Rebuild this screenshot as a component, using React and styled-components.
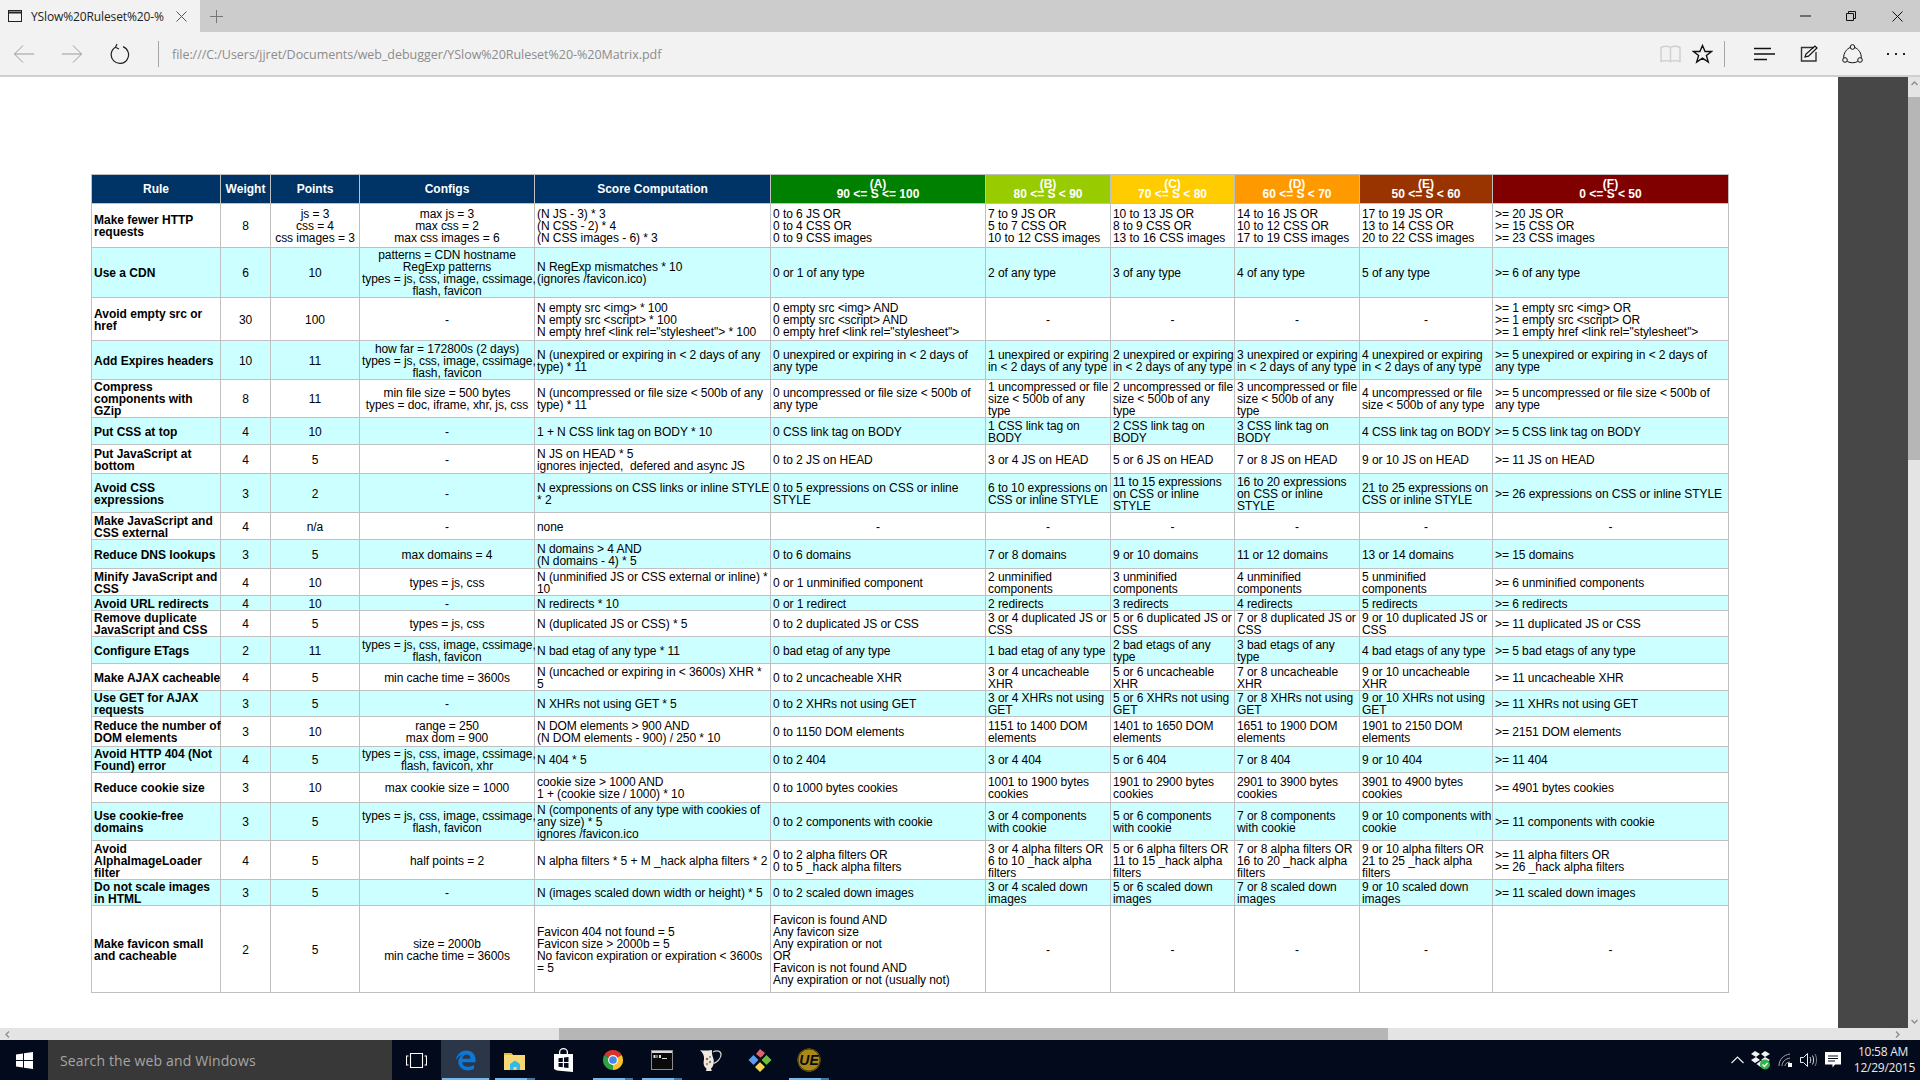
import React from "react";
import styled, { createGlobalStyle } from "styled-components";

const Global = createGlobalStyle`
  html, body { margin: 0; padding: 0; overflow: hidden; background: #fff; }
  * { box-sizing: border-box; }
`;

const Page = styled.div`
  width: 1920px; height: 1080px; display: flex; flex-direction: column; overflow: hidden;
  font-family: "Liberation Sans", Arial, sans-serif;
`;
const TabBar = styled.div`
  height: 32px; background: #cccccc; display: flex; align-items: stretch; flex: none;
`;
const Tab = styled.div`
  width: 200px; background: #f2f2f2; display: flex; align-items: center; padding-left: 7px; flex: none;
`;
const TabTitle = styled.span`
  width: 138px; margin-left: 7px; white-space: nowrap;
  font: 12px "Open Sans", sans-serif; color: #222; flex: none; letter-spacing: -0.12px;
`;
const TabClose = styled.span`
  margin-left: 7px; display: flex;
`;
const NewTab = styled.span`
  margin-left: 10px; width: 14px; display: flex; align-items: center;
`;
const WindowControls = styled.div`
  margin-left: auto; display: flex; align-items: center; padding-right: 0;
`;
const WindowButton = styled.span`
  width: 46px; height: 32px; display: flex; align-items: center; justify-content: center;
`;
const Toolbar = styled.div`
  height: 45px; flex: none; background: #f2f2f2; border-bottom: 2px solid #cfcfcf;
  display: flex; align-items: center; padding-right: 2px;
`;
const NavSlot = styled.span`
  width: 48px; height: 40px; display: flex; align-items: center; justify-content: center; flex: none;
`;
const ToolDivider = styled.span`
  width: 1px; height: 26px; background: #a6a6a6; flex: none;
  margin-left: ${p => p.$ml}px; margin-right: ${p => p.$mr}px;
`;
const Address = styled.span`
  font: 12.5px "Open Sans", sans-serif; color: #8c8c8c; white-space: nowrap; letter-spacing: -0.04px;
  padding-top: 1px;
`;
const ToolRight = styled.div`
  margin-left: auto; display: flex; align-items: center;
`;
const SmallSlot = styled.span`
  width: 32px; height: 40px; display: flex; align-items: center; justify-content: center;
`;
const HubSlot = styled.span`
  width: 44px; height: 40px; display: flex; align-items: center; justify-content: center;
`;
const Viewer = styled.div`
  flex: 1; min-height: 0; display: flex; flex-direction: column; background: #fff;
`;
const ViewerTop = styled.div`
  flex: 1; min-height: 0; display: flex;
`;
const Doc = styled.div`
  flex: 1; min-width: 0; overflow: hidden; padding: 97px 0 0 91px; background: #fff;
`;
const Gutter = styled.div`
  width: 70px; background: #474747; flex: none;
`;
const VScroll = styled.div`
  width: 12px; flex: none; background: #e4e4e4; display: flex; flex-direction: column;
`;
const ScrollArrow = styled.span`
  width: 12px; height: 20px; display: flex; justify-content: center; padding-top: 4px; flex: none;
`;
const VThumb = styled.div`
  height: 363px; background: #b6b6b6; flex: none;
`;
const VRest = styled.div`
  flex: 1; display: flex; align-items: flex-end; justify-content: center; padding-bottom: 4px;
`;
const HScroll = styled.div`
  height: 12px; flex: none; background: #e4e4e4; display: flex; align-items: center; position: relative;
`;
const HArrowLeft = styled.span`
  width: 12px; margin-left: 1px; display: flex; justify-content: center;
`;
const HThumb = styled.div`
  margin-left: 546px; width: 829px; height: 12px; background: #b6b6b6;
`;
const HArrowRight = styled.span`
  margin-left: auto; width: 12px; margin-right: 17px; display: flex; justify-content: center;
`;

const Table = styled.table`
  border-collapse: collapse; table-layout: fixed; width: 1637px;
  font: 12px/12px "Liberation Sans", Arial, sans-serif; color: #000;
`;
const HeadCell = styled.th`
  background: ${p => p.$bg}; color: #fff; border: 1px solid #c0c0c0; padding: 0 2px;
  font-weight: bold; text-align: center; line-height: ${p => p.$grade ? "10px" : "12px"};
  white-space: pre; vertical-align: middle;
`;
const Row = styled.tr`
  height: ${p => p.$h}px; background: ${p => p.$alt ? "#ccffff" : "#ffffff"};
`;
const Cell = styled.td`
  border: 1px solid #c0c0c0; padding: 1px 2px 0; white-space: pre; vertical-align: middle; overflow: visible;
  text-align: ${p => p.$center ? "center" : "left"};
  font-weight: ${p => p.$bold ? "bold" : "normal"};
  letter-spacing: ${p => p.$bold ? "0" : "-0.06px"};
`;

const Taskbar = styled.div`
  height: 40px; flex: none; background: #030a1c; display: flex; align-items: stretch; color: #fff;
`;
const StartButton = styled.span`
  width: 48px; display: flex; align-items: center; justify-content: center; flex: none;
`;
const SearchBox = styled.div`
  width: 344px; background: #383838; color: #a6a6a6; display: flex; align-items: center; padding-left: 12px;
  font: 14px "Open Sans", sans-serif; letter-spacing: 0.14px; flex: none;
`;
const TaskView = styled.span`
  width: 49px; display: flex; align-items: center; justify-content: center; flex: none;
`;
const TaskApp = styled.span`
  width: 49px; display: flex; align-items: center; justify-content: center; flex: none; position: relative;
  background: ${p => p.$active ? "#2b3648" : "transparent"};
  ${p => p.$running && `
    &::after {
      content: ""; position: absolute; bottom: 0; left: ${p.$active ? 1 : 5}px; height: 2px;
      width: ${p.$active ? 47 : 40}px; background: ${p.$active ? "#76b9ed" : "linear-gradient(to right, #76b9ed 32px, #3f78a8 32px)"};
    }
  `}
`;
const Tray = styled.div`
  margin-left: auto; display: flex; align-items: center;
`;
const TrayIcon = styled.span`
  width: ${p => p.$w}px; display: flex; align-items: center; justify-content: center;
`;
const Clock = styled.div`
  width: 64px; margin-left: 4px; margin-right: 5px; text-align: right;
  font: 12px/16px "Open Sans", sans-serif; color: #e8e8e8; letter-spacing: -0.25px; white-space: nowrap;
`;
const ClockLine = styled.div`
  text-align: ${p => p.$center ? "center" : "right"};
`;

const columns = [
  { name: "Rule", w: 129, bg: "#003366" },
  { name: "Weight", w: 50, bg: "#003366" },
  { name: "Points", w: 89, bg: "#003366" },
  { name: "Configs", w: 175, bg: "#003366" },
  { name: "Score Computation", w: 236, bg: "#003366" },
  { name: "(A)\n90 <= S <= 100", w: 215, bg: "#008000", grade: true },
  { name: "(B)\n80 <= S < 90", w: 125, bg: "#99cc00", grade: true },
  { name: "(C)\n70 <= S < 80", w: 124, bg: "#ffcc00", grade: true },
  { name: "(D)\n60 <= S < 70", w: 125, bg: "#ff9900", grade: true },
  { name: "(E)\n50 <= S < 60", w: 133, bg: "#993300", grade: true },
  { name: "(F)\n0 <= S < 50", w: 236, bg: "#800000", grade: true },
];

const ALL_TYPES = "types = js, css, image, cssimage,\nflash, favicon";

const rows = [
  [44, "Make fewer HTTP\nrequests", "8", "js = 3\ncss = 4\ncss images = 3", "max js = 3\nmax css = 2\nmax css images = 6", "(N JS - 3) * 3\n(N CSS - 2) * 4\n(N CSS images - 6) * 3", "0 to 6 JS OR\n0 to 4 CSS OR\n0 to 9 CSS images", "7 to 9 JS OR\n5 to 7 CSS OR\n10 to 12 CSS images", "10 to 13 JS OR\n8 to 9 CSS OR\n13 to 16 CSS images", "14 to 16 JS OR\n10 to 12 CSS OR\n17 to 19 CSS images", "17 to 19 JS OR\n13 to 14 CSS OR\n20 to 22 CSS images", ">= 20 JS OR\n>= 15 CSS OR\n>= 23 CSS images"],
  [50, "Use a CDN", "6", "10", "patterns = CDN hostname\nRegExp patterns\n" + ALL_TYPES, "N RegExp mismatches * 10\n(ignores /favicon.ico)", "0 or 1 of any type", "2 of any type", "3 of any type", "4 of any type", "5 of any type", ">= 6 of any type"],
  [43, "Avoid empty src or\nhref", "30", "100", "-", "N empty src <img> * 100\nN empty src <script> * 100\nN empty href <link rel=\"stylesheet\"> * 100", "0 empty src <img> AND\n0 empty src <script> AND\n0 empty href <link rel=\"stylesheet\">", "-", "-", "-", "-", ">= 1 empty src <img> OR\n>= 1 empty src <script> OR\n>= 1 empty href <link rel=\"stylesheet\">"],
  [39, "Add Expires headers", "10", "11", "how far = 172800s (2 days)\n" + ALL_TYPES, "N (unexpired or expiring in < 2 days of any\ntype) * 11", "0 unexpired or expiring in < 2 days of\nany type", "1 unexpired or expiring\nin < 2 days of any type", "2 unexpired or expiring\nin < 2 days of any type", "3 unexpired or expiring\nin < 2 days of any type", "4 unexpired or expiring\nin < 2 days of any type", ">= 5 unexpired or expiring in < 2 days of\nany type"],
  [38, "Compress\ncomponents with\nGZip", "8", "11", "min file size = 500 bytes\ntypes = doc, iframe, xhr, js, css", "N (uncompressed or file size < 500b of any\ntype) * 11", "0 uncompressed or file size < 500b of\nany type", "1 uncompressed or file\nsize < 500b of any\ntype", "2 uncompressed or file\nsize < 500b of any\ntype", "3 uncompressed or file\nsize < 500b of any\ntype", "4 uncompressed or file\nsize < 500b of any type", ">= 5 uncompressed or file size < 500b of\nany type"],
  [27, "Put CSS at top", "4", "10", "-", "1 + N CSS link tag on BODY * 10", "0 CSS link tag on BODY", "1 CSS link tag on\nBODY", "2 CSS link tag on\nBODY", "3 CSS link tag on\nBODY", "4 CSS link tag on BODY", ">= 5 CSS link tag on BODY"],
  [29, "Put JavaScript at\nbottom", "4", "5", "-", "N JS on HEAD * 5\nignores injected,  defered and async JS", "0 to 2 JS on HEAD", "3 or 4 JS on HEAD", "5 or 6 JS on HEAD", "7 or 8 JS on HEAD", "9 or 10 JS on HEAD", ">= 11 JS on HEAD"],
  [39, "Avoid CSS\nexpressions", "3", "2", "-", "N expressions on CSS links or inline STYLE\n* 2", "0 to 5 expressions on CSS or inline\nSTYLE", "6 to 10 expressions on\nCSS or inline STYLE", "11 to 15 expressions\non CSS or inline\nSTYLE", "16 to 20 expressions\non CSS or inline\nSTYLE", "21 to 25 expressions on\nCSS or inline STYLE", ">= 26 expressions on CSS or inline STYLE"],
  [27, "Make JavaScript and\nCSS external", "4", "n/a", "-", "none", "-", "-", "-", "-", "-", "-"],
  [29, "Reduce DNS lookups", "3", "5", "max domains = 4", "N domains > 4 AND\n(N domains - 4) * 5", "0 to 6 domains", "7 or 8 domains", "9 or 10 domains", "11 or 12 domains", "13 or 14 domains", ">= 15 domains"],
  [27, "Minify JavaScript and\nCSS", "4", "10", "types = js, css", "N (unminified JS or CSS external or inline) *\n10", "0 or 1 unminified component", "2 unminified\ncomponents", "3 unminified\ncomponents", "4 unminified\ncomponents", "5 unminified\ncomponents", ">= 6 unminified components"],
  [15, "Avoid URL redirects", "4", "10", "-", "N redirects * 10", "0 or 1 redirect", "2 redirects", "3 redirects", "4 redirects", "5 redirects", ">= 6 redirects"],
  [26, "Remove duplicate\nJavaScript and CSS", "4", "5", "types = js, css", "N (duplicated JS or CSS) * 5", "0 to 2 duplicated JS or CSS", "3 or 4 duplicated JS or\nCSS", "5 or 6 duplicated JS or\nCSS", "7 or 8 duplicated JS or\nCSS", "9 or 10 duplicated JS or\nCSS", ">= 11 duplicated JS or CSS"],
  [27, "Configure ETags", "2", "11", ALL_TYPES, "N bad etag of any type * 11", "0 bad etag of any type", "1 bad etag of any type", "2 bad etags of any\ntype", "3 bad etags of any\ntype", "4 bad etags of any type", ">= 5 bad etags of any type"],
  [27, "Make AJAX cacheable", "4", "5", "min cache time = 3600s", "N (uncached or expiring in < 3600s) XHR *\n5", "0 to 2 uncacheable XHR", "3 or 4 uncacheable\nXHR", "5 or 6 uncacheable\nXHR", "7 or 8 uncacheable\nXHR", "9 or 10 uncacheable\nXHR", ">= 11 uncacheable XHR"],
  [26, "Use GET for AJAX\nrequests", "3", "5", "-", "N XHRs not using GET * 5", "0 to 2 XHRs not using GET", "3 or 4 XHRs not using\nGET", "5 or 6 XHRs not using\nGET", "7 or 8 XHRs not using\nGET", "9 or 10 XHRs not using\nGET", ">= 11 XHRs not using GET"],
  [30, "Reduce the number of\nDOM elements", "3", "10", "range = 250\nmax dom = 900", "N DOM elements > 900 AND\n(N DOM elements - 900) / 250 * 10", "0 to 1150 DOM elements", "1151 to 1400 DOM\nelements", "1401 to 1650 DOM\nelements", "1651 to 1900 DOM\nelements", "1901 to 2150 DOM\nelements", ">= 2151 DOM elements"],
  [26, "Avoid HTTP 404 (Not\nFound) error", "4", "5", "types = js, css, image, cssimage,\nflash, favicon, xhr", "N 404 * 5", "0 to 2 404", "3 or 4 404", "5 or 6 404", "7 or 8 404", "9 or 10 404", ">= 11 404"],
  [30, "Reduce cookie size", "3", "10", "max cookie size = 1000", "cookie size > 1000 AND\n1 + (cookie size / 1000) * 10", "0 to 1000 bytes cookies", "1001 to 1900 bytes\ncookies", "1901 to 2900 bytes\ncookies", "2901 to 3900 bytes\ncookies", "3901 to 4900 bytes\ncookies", ">= 4901 bytes cookies"],
  [38, "Use cookie-free\ndomains", "3", "5", ALL_TYPES, "N (components of any type with cookies of\nany size) * 5\nignores /favicon.ico", "0 to 2 components with cookie", "3 or 4 components\nwith cookie", "5 or 6 components\nwith cookie", "7 or 8 components\nwith cookie", "9 or 10 components with\ncookie", ">= 11 components with cookie"],
  [39, "Avoid\nAlphaImageLoader\nfilter", "4", "5", "half points = 2", "N alpha filters * 5 + M _hack alpha filters * 2", "0 to 2 alpha filters OR\n0 to 5 _hack alpha filters", "3 or 4 alpha filters OR\n6 to 10 _hack alpha\nfilters", "5 or 6 alpha filters OR\n11 to 15 _hack alpha\nfilters", "7 or 8 alpha filters OR\n16 to 20 _hack alpha\nfilters", "9 or 10 alpha filters OR\n21 to 25 _hack alpha\nfilters", ">= 11 alpha filters OR\n>= 26 _hack alpha filters"],
  [26, "Do not scale images\nin HTML", "3", "5", "-", "N (images scaled down width or height) * 5", "0 to 2 scaled down images", "3 or 4 scaled down\nimages", "5 or 6 scaled down\nimages", "7 or 8 scaled down\nimages", "9 or 10 scaled down\nimages", ">= 11 scaled down images"],
  [87, "Make favicon small\nand cacheable", "2", "5", "size = 2000b\nmin cache time = 3600s", "Favicon 404 not found = 5\nFavicon size > 2000b = 5\nNo favicon expiration or expiration < 3600s\n= 5", "Favicon is found AND\nAny favicon size\nAny expiration or not\nOR\nFavicon is not found AND\nAny expiration or not (usually not)", "-", "-", "-", "-", "-"],
];

const isCentered = (index, text) => index === 1 || index === 2 || index === 3 || (index >= 5 && text === "-");

const Line = ({ d, w = 1, c = "#444", ...rest }) => <path d={d} fill="none" stroke={c} strokeWidth={w} {...rest} />;

const Icons = {
  page: <svg width="17" height="15" viewBox="0 0 17 15"><rect x="1.5" y="1.5" width="13" height="11" fill="none" stroke="#222" /><path d="M1.5 3.5h13" stroke="#222" strokeWidth="2" /></svg>,
  close: <svg width="11" height="11" viewBox="0 0 11 11"><Line d="M.5.5l10 10M10.5.5l-10 10" c="#555" /></svg>,
  plus: <svg width="13" height="13" viewBox="0 0 13 13"><Line d="M6.5 0v13M0 6.5h13" c="#777" /></svg>,
  min: <svg width="11" height="2" viewBox="0 0 11 2"><path d="M0 1h11" stroke="#111" /></svg>,
  restore: <svg width="10" height="10" viewBox="0 0 10 10"><Line d="M.5 2.5h7v7h-7zM2.5 2.5v-2h7v7h-2" c="#111" /></svg>,
  x: <svg width="11" height="11" viewBox="0 0 11 11"><Line d="M.5.5l10 10M10.5.5l-10 10" c="#111" /></svg>,
  back: <svg width="22" height="20" viewBox="0 0 22 20"><Line d="M21 10H1.5M10 1.5L1.5 10l8.5 8.5" c="#9a9a9a" /></svg>,
  forward: <svg width="22" height="20" viewBox="0 0 22 20"><Line d="M1 10h19.5M12 1.5l8.5 8.5-8.5 8.5" c="#9a9a9a" /></svg>,
  refresh: <svg width="20" height="22" viewBox="0 0 20 22"><Line d="M5.5 4.2A8.7 8.7 0 1 0 13 3.6" c="#222" w="1.2" /><Line d="M7 1l-1.5 3.2L9 6" c="#222" w="1.2" /></svg>,
  book: <svg width="21" height="18" viewBox="0 0 21 18"><Line d="M1 2.5C4 1 8 1 10.5 2.5 13 1 17 1 20 2.5v14c-3-1-7-1-9.5 0-2.5-1-6.500-1-9.500 0zM10.500 2.500v14" c="#cfcfcf" w="1.4" /></svg>,
  star: <svg width="21" height="20" viewBox="0 0 21 20"><path d="M10.500 1.500l2.600 6h6.400l-5.100 4 1.900 6.500-5.800-3.800L4.700 18l1.900-6.500-5.100-4h6.400z" fill="none" stroke="#111" strokeWidth="1.400" /></svg>,
  hub: <svg width="21" height="14" viewBox="0 0 21 14"><path d="M0 1.500h17M0 7h21M0 12.500h13" stroke="#111" strokeWidth="1.300" /></svg>,
  note: <svg width="20" height="17" viewBox="0 0 20 17"><Line d="M16 2.500H3.500v13.500h14.500V7" c="#333" w="1.400" /><path d="M7 12l1-3 9-8 2 2-8.500 8.200z" fill="none" stroke="#111" strokeWidth="1.200" /></svg>,
  share: <svg width="21" height="20" viewBox="0 0 21 20"><circle cx="10.500" cy="3" r="2.300" fill="none" stroke="#111" /><circle cx="3" cy="16" r="2.300" fill="none" stroke="#111" /><circle cx="18" cy="16" r="2.300" fill="none" stroke="#111" /><Line d="M8.200 3.500C4.500 5 1.500 9 1.700 13.900M12.800 3.500C16.500 5 19.500 9 19.300 13.900M5.300 17.500c3.500 1.700 7 1.700 10.400 0" c="#111" /></svg>,
  more: <svg width="18" height="4" viewBox="0 0 18 4"><g fill="#222"><rect x="0" y="1" width="2" height="2" /><rect x="8" y="1" width="2" height="2" /><rect x="16" y="1" width="2" height="2" /></g></svg>,
  up: <svg width="7" height="5" viewBox="0 0 7 5"><path d="M.5 4l3-3 3 3" fill="none" stroke="#8e8e8e" strokeWidth="1.400" /></svg>,
  down: <svg width="7" height="5" viewBox="0 0 7 5"><path d="M.5 1l3 3 3-3" fill="none" stroke="#8e8e8e" strokeWidth="1.400" /></svg>,
  left: <svg width="5" height="7" viewBox="0 0 5 7"><path d="M4 .5l-3 3 3 3" fill="none" stroke="#8e8e8e" strokeWidth="1.400" /></svg>,
  right: <svg width="5" height="7" viewBox="0 0 5 7"><path d="M1 .5l3 3-3 3" fill="none" stroke="#8e8e8e" strokeWidth="1.400" /></svg>,
  windows: <svg width="17" height="17" viewBox="0 0 17 17"><path d="M0 2.400l7-1v6.600H0zM8 1.200l9-1.200v8H8zM0 9h7v6.600l-7-1zM8 9h9v8l-9-1.200z" fill="#fff" /></svg>,
  taskView: <svg width="21" height="15" viewBox="0 0 21 15"><Line d="M4.500.5h12v14h-12zM2.500 3H.5v9h2M18.500 3h2v9h-2" c="#fff" w="1.100" /></svg>,
  edge: <svg width="21" height="22" viewBox="0 0 24 24"><path fillRule="evenodd" d="M1 12.500C1.500 6 6.500 1 13 1c6.500 0 10.500 4.500 10.500 11v2.500H8c.5 3.500 3.300 5.300 6.800 5.300 2.700 0 5-.7 7-2v4.300c-2 1.200-4.900 1.900-7.900 1.900C7.500 23 3.800 19 3.800 14c0-3.500 2-6.200 5-8C5.500 6.500 2.800 9 1 12.500zM8.300 10.500h9.500C17.700 7.500 15.700 5.700 13 5.700c-2.500 0-4.200 2-4.700 4.800z" fill="#0c78d8" /></svg>,
  explorer: <svg width="22" height="19" viewBox="0 0 22 19"><path d="M0 2h7l2 2h12v15H0z" fill="#f8d775" /><path d="M0 2h7l2 2h-9z" fill="#e8b93c" /><path d="M6 19v-6l5-3.500 5 3.500v6h-3.500v-3h-3v3z" fill="#35b9e6" /></svg>,
  store: <svg width="21" height="24" viewBox="0 0 21 24"><path fillRule="evenodd" d="M1 6h19v18L4 22.500 1 21zM6 6V4a4.500 4 0 0 1 9 0v2h-1.300V4a3.200 2.800 0 0 0-6.400 0v2z" fill="#fff" /><path d="M5.500 10.300l4.300-.5v4.200H5.500zM11 9.600l4.500-.6v5h-4.500zM5.500 15h4.300v4.300l-4.300-.6zM11 15h4.500v5l-4.500-.6z" fill="#030a1c" /></svg>,
  chrome: <svg width="22" height="22" viewBox="0 0 24 24"><path d="M12 12L2.500 6.500A11 11 0 0 1 21.500 6.500z" fill="#d8352a" /><path d="M12 12L2.500 6.500A11 11 0 0 0 12 23z" fill="#2f9e44" /><path d="M12 12L21.500 6.500A11 11 0 0 1 12 23z" fill="#f7c325" /><circle cx="12" cy="12" r="5.400" fill="#fff" /><circle cx="12" cy="12" r="4.200" fill="#4a86e8" /></svg>,
  cmd: <svg width="22" height="20" viewBox="0 0 22 20"><rect width="22" height="20" fill="#8c8c8c" /><rect x="1" y="3" width="20" height="16" fill="#0a0a0a" /><rect x="1" y="1" width="20" height="2" fill="#dcdcdc" /><rect x="2.500" y="5" width="2" height="3" fill="#ddd" /><rect x="5.500" y="5" width="1" height="3" fill="#ddd" /><rect x="8" y="5" width="2" height="3" fill="#ddd" /><rect x="11" y="8" width="5" height="1" fill="#ddd" /></svg>,
  pitcher: <svg width="24" height="24" viewBox="0 0 24 24"><path d="M1 2c3 1 8 .5 12 0-.5 3 .5 6 1.500 9 1 4-.5 8-2.500 9.500l.8 2.500H7l.5-2.500C5 19 4 15.500 5 11.500 5.500 8 4 5 1 2z" fill="#eeeae2" /><path d="M14 4c4-2 8-1 8 2.500 0 4-4 7.500-7.500 9" fill="none" stroke="#cfcbc2" strokeWidth="1.300" /><circle cx="8" cy="11" r="1.300" fill="#b5574b" /><circle cx="11" cy="14" r="1.200" fill="#6e8a54" /><circle cx="8" cy="16" r="1.200" fill="#c58a5c" /><circle cx="11" cy="9" r="1" fill="#6b7f9e" /></svg>,
  git: <svg width="24" height="24" viewBox="0 0 24 24"><path d="M5.500 7L10.500 12 5.500 17 .5 12z" fill="#5b9bf0" /><path d="M12 1l5 4-4 5-5-4z" fill="#e4606d" /><path d="M18.500 7l5 5-5 5-5-5z" fill="#6cbf3c" /><path d="M12 14l5 5-5 5-5-5z" fill="#f6d350" /><path d="M10 9l4 6M14 9l-4 6" stroke="#111" strokeWidth="1.400" /></svg>,
  dropbox: <svg width="20" height="20" viewBox="0 0 20 20"><path d="M4 1l5 3-4 3-5-3zM14 1l5 3-5 3-4-3zM5 7l4 3-5 3-4-3zM14 7l5 3-5 3-4-3zM9.500 11l4 3-4 3-4-3z" fill="#f2f2f2" /><circle cx="14" cy="14.500" r="5" fill="#31b24a" /><path d="M11.500 14.500l2 2 3-3.500" fill="none" stroke="#fff" strokeWidth="1.300" /></svg>,
  caret: <svg width="13" height="8" viewBox="0 0 13 8"><path d="M.5 7L6.500 1l6 6" fill="none" stroke="#eee" strokeWidth="1.200" /></svg>,
  wifi: <svg width="14" height="14" viewBox="0 0 14 14"><path d="M1 13C1 7 5 2 12 1M4 13c0-4 3-7 8-8M7 13c0-2 2-4 5-4" fill="none" stroke="#a8a8a8" strokeWidth="1" /><rect x="10" y="10" width="4" height="4" fill="#fff" /></svg>,
  speaker: <svg width="17" height="14" viewBox="0 0 17 14"><path d="M.5 4.500h3l4-4v13l-4-4h-3z" fill="none" stroke="#eee" /><path d="M10 4c1 2 1 4 0 6M12.500 2.500c1.500 3 1.500 6 0 9" fill="none" stroke="#ddd" /><path d="M15 1c2 3.500 2 8.500 0 12" fill="none" stroke="#888" /></svg>,
  message: <svg width="16" height="16" viewBox="0 0 16 16"><path fillRule="evenodd" d="M0 0h16v12.500H10L7.500 15.500V12.500H0zM3 3.500v1h10v-1zM3 6v1h10V6zM3 8.500v1h7v-1z" fill="#fff" /></svg>,
};

const UEIcon = () => (
  <svg width="24" height="24" viewBox="0 0 24 24">
    <circle cx="12" cy="12" r="11.500" fill="#a98a16" />
    <circle cx="12" cy="12" r="11" fill="none" stroke="#4a3b08" strokeWidth="1" />
    <text x="12" y="17" fontFamily="Liberation Sans" fontWeight="bold" fontStyle="italic" fontSize="14" textAnchor="middle" fill="#0a0a0a">UE</text>
  </svg>
);

const apps = [
  { icon: Icons.edge, active: true, running: true },
  { icon: Icons.explorer, running: true },
  { icon: Icons.store },
  { icon: Icons.chrome, running: true },
  { icon: Icons.cmd, running: true },
  { icon: Icons.pitcher },
  { icon: Icons.git },
  { icon: <UEIcon />, running: true },
];

const Matrix = () => (
  <Table>
    <colgroup>
      {columns.map(c => <col key={c.name} width={c.w} />)}
    </colgroup>
    <thead>
      <Row $h={29}>
        {columns.map(c => <HeadCell key={c.name} $bg={c.bg} $grade={c.grade}>{c.name}</HeadCell>)}
      </Row>
    </thead>
    <tbody>
      {rows.map(([h, ...cells], r) => (
        <Row key={r} $h={h} $alt={r % 2 === 1}>
          {cells.map((text, i) => (
            <Cell key={i} $bold={i === 0} $center={isCentered(i, text)}>{text}</Cell>
          ))}
        </Row>
      ))}
    </tbody>
  </Table>
);

export default function App() {
  return (
    <Page>
      <Global />
      <TabBar>
        <Tab>
          {Icons.page}
          <TabTitle>YSlow%20Ruleset%20-%</TabTitle>
          <TabClose>{Icons.close}</TabClose>
        </Tab>
        <NewTab>{Icons.plus}</NewTab>
        <WindowControls>
          <WindowButton>{Icons.min}</WindowButton>
          <WindowButton>{Icons.restore}</WindowButton>
          <WindowButton>{Icons.x}</WindowButton>
        </WindowControls>
      </TabBar>
      <Toolbar>
        <NavSlot>{Icons.back}</NavSlot>
        <NavSlot>{Icons.forward}</NavSlot>
        <NavSlot>{Icons.refresh}</NavSlot>
        <ToolDivider $ml={14} $mr={13} />
        <Address>file:///C:/Users/jjret/Documents/web_debugger/YSlow%20Ruleset%20-%20Matrix.pdf</Address>
        <ToolRight>
          <SmallSlot>{Icons.book}</SmallSlot>
          <SmallSlot>{Icons.star}</SmallSlot>
          <ToolDivider $ml={6} $mr={17} />
          <HubSlot>{Icons.hub}</HubSlot>
          <HubSlot>{Icons.note}</HubSlot>
          <HubSlot>{Icons.share}</HubSlot>
          <HubSlot>{Icons.more}</HubSlot>
        </ToolRight>
      </Toolbar>
      <Viewer>
        <ViewerTop>
          <Doc><Matrix /></Doc>
          <Gutter />
          <VScroll>
            <ScrollArrow>{Icons.up}</ScrollArrow>
            <VThumb />
            <VRest>{Icons.down}</VRest>
          </VScroll>
        </ViewerTop>
        <HScroll>
          <HArrowLeft>{Icons.left}</HArrowLeft>
          <HThumb />
          <HArrowRight>{Icons.right}</HArrowRight>
        </HScroll>
      </Viewer>
      <Taskbar>
        <StartButton>{Icons.windows}</StartButton>
        <SearchBox>Search the web and Windows</SearchBox>
        <TaskView>{Icons.taskView}</TaskView>
        {apps.map((a, i) => (
          <TaskApp key={i} $active={a.active} $running={a.running}>{a.icon}</TaskApp>
        ))}
        <Tray>
          <TrayIcon $w={24}>{Icons.caret}</TrayIcon>
          <TrayIcon $w={24}>{Icons.dropbox}</TrayIcon>
          <TrayIcon $w={24}>{Icons.wifi}</TrayIcon>
          <TrayIcon $w={22}>{Icons.speaker}</TrayIcon>
          <TrayIcon $w={28}>{Icons.message}</TrayIcon>
          <Clock>
            <ClockLine $center>10:58 AM</ClockLine>
            <ClockLine>12/29/2015</ClockLine>
          </Clock>
        </Tray>
      </Taskbar>
    </Page>
  );
}
